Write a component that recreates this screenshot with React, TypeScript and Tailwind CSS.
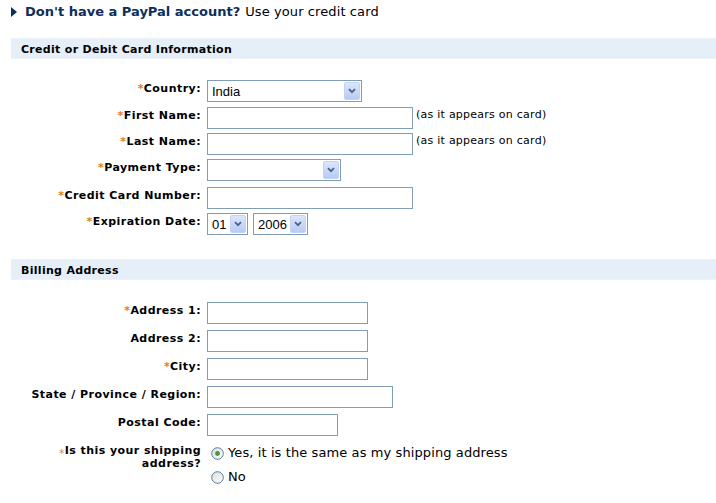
import type { ReactNode } from "react";

const labelCol =
  "w-[201px] shrink-0 text-right text-[11px] font-bold leading-[13px] tracking-[0.45px] text-black pt-[2px]";

function Star() {
  return <span className="text-[#e17b2b]">*</span>;
}

function Row({ label, req, mt, children }: { label: ReactNode; req?: boolean; mt: string; children: ReactNode }) {
  return (
    <div className={`flex items-start gap-[6px] ${mt}`}>
      <div className={labelCol}>
        {req && <Star />}
        {label}
      </div>
      {children}
    </div>
  );
}

function TextBox({ w }: { w: string }) {
  return <input className={`h-[22px] ${w} border border-[#7f9db9] bg-white px-1 text-[13px] outline-none`} />;
}

function Chevron() {
  return (
    <svg width="8" height="6" viewBox="0 0 8 6">
      <path d="M1 1.2 L4 4.2 L7 1.2" fill="none" stroke="#4d6185" strokeWidth="1.8" />
    </svg>
  );
}

function Select({ w, value }: { w: string; value?: string }) {
  return (
    <div className={`flex h-[22px] ${w} items-center border border-[#7f9db9] bg-white pr-[1px]`}>
      <span className="flex-1 truncate pl-[4px] pt-[2px] font-['Liberation_Sans',sans-serif] text-[13px] text-black">
        {value}
      </span>
      <span className="flex h-[18px] w-[16px] items-center justify-center rounded-[2px] border border-[#c3d3f5] bg-gradient-to-b from-[#dbe6fd] to-[#b7cbf4]">
        <Chevron />
      </span>
    </div>
  );
}

function Radio({ checked }: { checked?: boolean }) {
  return (
    <svg width="13" height="13" viewBox="0 0 13 13">
      <defs>
        <linearGradient id="rg" x1="0" y1="0" x2="1" y2="1">
          <stop offset="0" stopColor="#dcdcd6" />
          <stop offset="1" stopColor="#ffffff" />
        </linearGradient>
      </defs>
      <circle cx="6.5" cy="6.5" r="5.8" fill="url(#rg)" stroke="#5c7a9a" strokeWidth="1" />
      {checked && <circle cx="6.5" cy="6.5" r="2.4" fill="#3f9a3a" />}
    </svg>
  );
}

function SectionBar({ title, mt }: { title: string; mt: string }) {
  return (
    <div
      className={`ml-[11px] h-[21px] ${mt} border-y border-[#edf2f9] bg-[#e6eef7] pl-[10px] pt-[2px] text-[11px] font-bold leading-[17px] tracking-[0.3px] text-black`}
    >
      {title}
    </div>
  );
}

const note = "-ml-[3px] pt-[1px] text-[11px] leading-[13px] tracking-[0.25px] text-black";

export default function App() {
  return (
    <div className="h-[503px] w-[716px] overflow-hidden bg-white font-['DejaVu_Sans',Verdana,sans-serif]">
      <div className="flex items-center pl-[11px] pt-[4px] text-[13px] leading-4">
        <svg width="6" height="10" viewBox="0 0 6 10" className="mr-[8px]">
          <path d="M0 0 L6 5 L0 10 Z" fill="#0b2f5e" />
        </svg>
        <span className="font-bold text-[#0b2f5e]">Don't have a PayPal account?</span>
        <span className="ml-[5px] tracking-[0.1px] text-black">Use your credit card</span>
      </div>

      <SectionBar title="Credit or Debit Card Information" mt="mt-[18px]" />

      <Row label="Country:" req mt="mt-[21px]">
        <Select w="w-[155px]" value="India" />
      </Row>
      <Row label="First Name:" req mt="mt-[5px]">
        <TextBox w="w-[206px]" />
        <span className={note}>(as it appears on card)</span>
      </Row>
      <Row label="Last Name:" req mt="mt-[4px]">
        <TextBox w="w-[206px]" />
        <span className={note}>(as it appears on card)</span>
      </Row>
      <Row label="Payment Type:" req mt="mt-[4px]">
        <Select w="w-[134px]" />
      </Row>
      <Row label="Credit Card Number:" req mt="mt-[6px]">
        <TextBox w="w-[206px]" />
      </Row>
      <Row label="Expiration Date:" req mt="mt-[4px]">
        <div className="flex gap-[5px]">
          <Select w="w-[41px]" value="01" />
          <Select w="w-[55px]" value="2006" />
        </div>
      </Row>

      <SectionBar title="Billing Address" mt="mt-[24px]" />

      <Row label="Address 1:" req mt="mt-[22px]">
        <TextBox w="w-[161px]" />
      </Row>
      <Row label="Address 2:" mt="mt-[6px]">
        <TextBox w="w-[161px]" />
      </Row>
      <Row label="City:" req mt="mt-[6px]">
        <TextBox w="w-[161px]" />
      </Row>
      <Row label="State / Province / Region:" mt="mt-[6px]">
        <TextBox w="w-[186px]" />
      </Row>
      <Row label="Postal Code:" mt="mt-[6px]">
        <TextBox w="w-[131px]" />
      </Row>

      <div className="mt-[7px] flex items-start gap-[6px]">
        <div className="w-[201px] shrink-0 pt-[1px] text-right text-[11px] font-bold leading-[13px] tracking-[0.45px] text-black">
          <span className="relative top-[3px] text-[10px] font-normal text-[#e17b2b]">*</span>
          Is this your shipping
          <br />
          address?
        </div>
        <div className="flex flex-col gap-[4px] pl-[4px] text-[13px] tracking-[0.1px] text-black">
          <label className="flex h-[20px] items-center gap-[4px]">
            <Radio checked />
            <span>Yes, it is the same as my shipping address</span>
          </label>
          <label className="flex h-[20px] items-center gap-[4px]">
            <Radio />
            <span>No</span>
          </label>
        </div>
      </div>
    </div>
  );
}
